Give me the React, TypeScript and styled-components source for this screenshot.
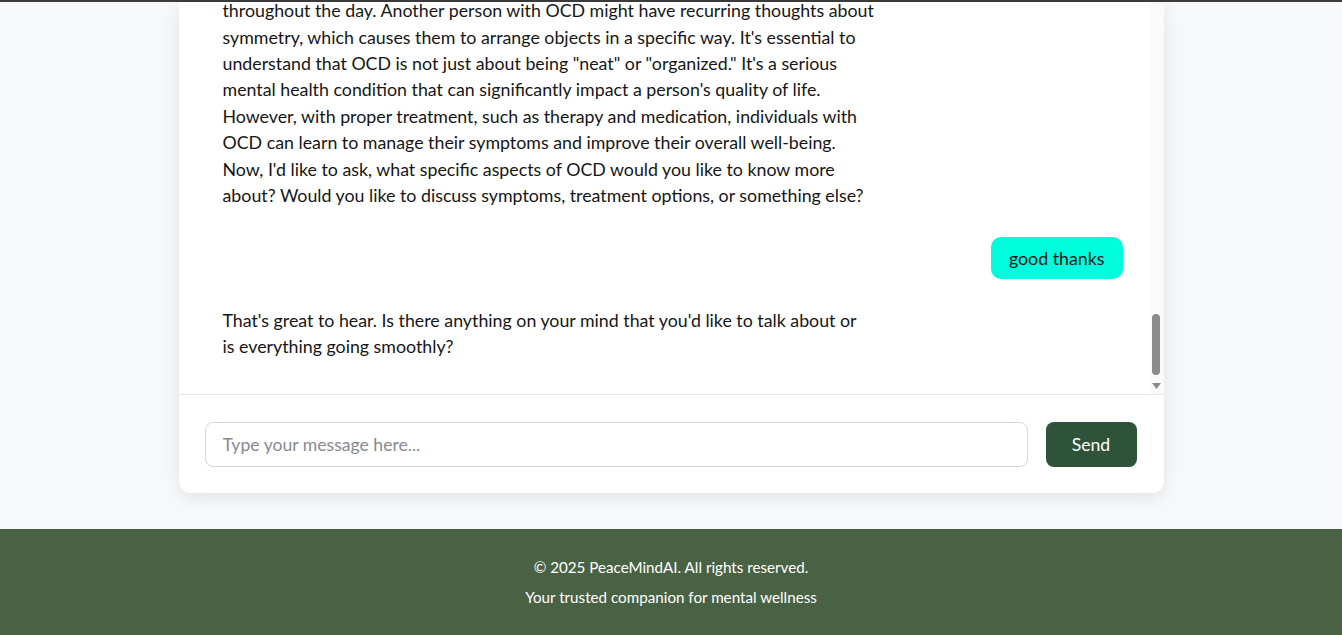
import { useLayoutEffect, useRef } from 'react';
import styled, { createGlobalStyle } from 'styled-components';

const GlobalStyle = createGlobalStyle`
    html, body {
        margin: 0;
        padding: 0;
        background: #f7f8fa;
        font-family: "Lato", "Noto Sans", "Liberation Sans", sans-serif;
        color: #161616;
    }
    * { box-sizing: border-box; }
`;

type Message = { from: 'bot' | 'user'; text: string };

const messages: Message[] = [
    { from: 'bot', text: "Hello! I'm PeaceMindAI, your companion for mental wellness.\nHow are you feeling today?" },
    { from: 'user', text: 'what is OCD?' },
    {
        from: 'bot',
        text: [
            'OCD, or Obsessive-Compulsive Disorder, is a mental health condition',
            'characterized by recurring, unwanted thoughts (obsessions) and repetitive',
            'behaviors (compulsions) that a person feels driven to perform. For example,',
            'someone with OCD might have an intense fear of germs, leading them to wash',
            'their hands',
            'throughout the day. Another person with OCD might have recurring thoughts about',
            "symmetry, which causes them to arrange objects in a specific way. It's essential to",
            'understand that OCD is not just about being "neat" or "organized." It\'s a serious',
            "mental health condition that can significantly impact a person's quality of life.",
            'However, with proper treatment, such as therapy and medication, individuals with',
            'OCD can learn to manage their symptoms and improve their overall well-being.',
            "Now, I'd like to ask, what specific aspects of OCD would you like to know more",
            'about? Would you like to discuss symptoms, treatment options, or something else?',
        ].join('\n'),
    },
    { from: 'user', text: 'good thanks' },
    {
        from: 'bot',
        text: "That's great to hear. Is there anything on your mind that you'd like to talk about or\nis everything going smoothly?",
    },
];

// остаток шапки, которая ушла за верх экрана
const TopEdge = styled.div`
    height: 2px;
    background: #3c3c3c;
`;

const Main = styled.main`
    padding-bottom: 36px;
`;

const ChatCard = styled.section`
    width: 985px;
    margin: 0 auto;
    background: #ffffff;
    border-radius: 0 0 12px 12px;
    box-shadow: 0 4px 18px rgba(0, 0, 0, 0.09);
    display: flex;
    flex-direction: column;
`;

const MessagePane = styled.div`
    position: relative;
    height: 392px;
`;

const MessageList = styled.div`
    height: 100%;
    overflow-y: auto;
    scrollbar-width: none;
    padding: 24px 41px 26px 26px;
    display: flex;
    flex-direction: column;
    gap: 20px;

    &::-webkit-scrollbar {
        display: none;
    }
`;

/* нарисованная полоса прокрутки (в скриншоте системные полосы скрыты) */
const ScrollRail = styled.div`
    position: absolute;
    top: 0;
    right: 0;
    bottom: 0;
    width: 15px;
    background: #fafafa;
`;

const ScrollThumb = styled.div`
    position: absolute;
    top: 312px;
    left: 3px;
    width: 8px;
    height: 61px;
    border-radius: 4px;
    background: #8b8b8b;
`;

const ScrollArrow = styled.svg`
    position: absolute;
    left: 0;
    bottom: 0;
    width: 15px;
    height: 15px;
`;

const Bubble = styled.div<{ $from: 'bot' | 'user' }>`
    align-self: ${p => (p.$from === 'user' ? 'flex-end' : 'flex-start')};
    max-width: 75%;
    padding: 8px 18px;
    border-radius: 10px;
    background: ${p => (p.$from === 'user' ? '#00fcdc' : 'transparent')};
    font-size: 17.8px;
    line-height: 26.4px;
    white-space: pre-line;
    flex-shrink: 0;
`;

const InputBar = styled.form`
    display: flex;
    gap: 18px;
    padding: 27px 27px 26px 26px;
    border-top: 1px solid #e6e7ea;
`;

const TextInput = styled.input`
    flex: 1;
    height: 45px;
    padding: 0 17px;
    border: 1px solid #d3d6dc;
    border-radius: 8px;
    font-family: inherit;
    font-size: 17.6px;
    color: #161616;
    outline: none;

    &::placeholder {
        color: #878a90;
    }
`;

const SendButton = styled.button`
    width: 91px;
    height: 45px;
    border: none;
    border-radius: 8px;
    background: #2e5339;
    color: #ffffff;
    font-family: inherit;
    font-size: 17.6px;
    cursor: pointer;
`;

const Footer = styled.footer`
    height: 106px;
    background: #4a6244;
    color: #ffffff;
    text-align: center;
    padding-top: 26.6px;
    font-size: 15.2px;
    line-height: 22.8px;

    p {
        margin: 0 0 7.2px;
    }
`;

const App = () => {
    const listRef = useRef<HTMLDivElement>(null);

    useLayoutEffect(() => {
        const el = listRef.current;
        if (el) el.scrollTop = el.scrollHeight;
    }, []);

    return (
        <>
            <GlobalStyle />
            <TopEdge />
            <Main>
                <ChatCard>
                    <MessagePane>
                        <MessageList ref={listRef}>
                            {messages.map((m, i) => (
                                <Bubble key={i} $from={m.from}>
                                    {m.text}
                                </Bubble>
                            ))}
                        </MessageList>
                        <ScrollRail>
                            <ScrollThumb />
                            <ScrollArrow viewBox="0 0 15 15">
                                <polygon points="3,4 12,4 7.5,10" fill="#8b8b8b" />
                            </ScrollArrow>
                        </ScrollRail>
                    </MessagePane>
                    <InputBar onSubmit={e => e.preventDefault()}>
                        <TextInput placeholder="Type your message here..." />
                        <SendButton type="submit">Send</SendButton>
                    </InputBar>
                </ChatCard>
            </Main>
            <Footer>
                <p>© 2025 PeaceMindAI. All rights reserved.</p>
                <p>Your trusted companion for mental wellness</p>
            </Footer>
        </>
    );
};

export default App;
